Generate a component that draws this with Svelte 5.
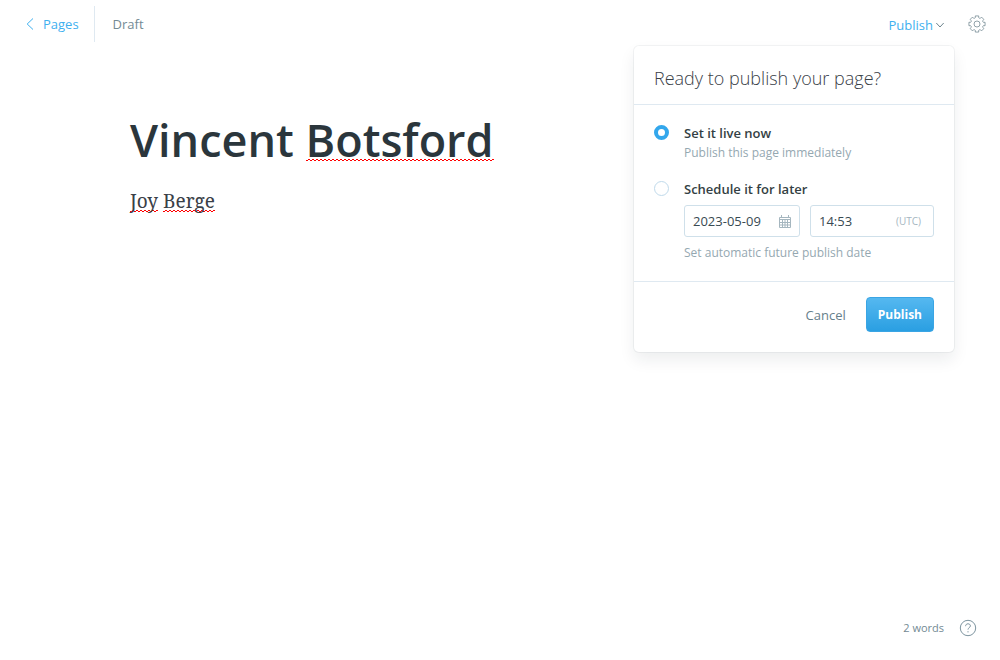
<script>
  let timing = $state('now');
  let date = $state('2023-05-09');
  let time = $state('14:53');

  // Outline of an eight-toothed gear centred on 12,12
  const gear = Array.from({ length: 8 }, (_, i) => {
    const at = (deg, r) => {
      const a = ((i * 45 + deg) * Math.PI) / 180;
      return `${(12 + r * Math.sin(a)).toFixed(2)} ${(12 - r * Math.cos(a)).toFixed(2)}`;
    };
    return `${i ? 'L' : 'M'}${at(-12, 11)}L${at(12, 11)}Q${at(12, 8)} ${at(22.5, 8.4)}Q${at(33, 8)} ${at(33, 11)}`;
  }).join('') + 'Z';
</script>

<div class="editor">
  <header>
    <nav>
      <a class="back" href="#pages">
        <svg width="8" height="12" viewBox="0 0 8 12" aria-hidden="true"><path d="M7 .5 1.2 6 7 11.5" /></svg>
        Pages
      </a>
      <span class="status">Draft</span>
    </nav>
    <div class="actions">
      <div class="publish-menu">
        <button class="trigger" type="button" aria-expanded="true">
          Publish
          <svg width="8" height="6" viewBox="0 0 8 6" aria-hidden="true"><path d="M.3 1 4 5 7.7 1" /></svg>
        </button>
        <form class="popover" onsubmit={(e) => e.preventDefault()}>
          <h2>Ready to publish your page?</h2>
          <div class="options">
            <div class="option">
              <input type="radio" id="now" value="now" bind:group={timing} />
              <div class="detail">
                <label for="now">Set it live now</label>
                <p>Publish this page immediately</p>
              </div>
            </div>
            <div class="option">
              <input type="radio" id="later" value="later" bind:group={timing} />
              <div class="detail">
                <label for="later">Schedule it for later</label>
                <div class="fields">
                  <div class="field date">
                    <input type="text" aria-label="Date" bind:value={date} />
                    <svg width="12" height="13" viewBox="0 0 12 13" aria-hidden="true">
                      <path d="M.5 2.5h11v10H.5zM.5 4.5h11M.5 7.5h11M.5 10h11M3.5 4.5v8M6 4.5v8M8.5 4.5v8M2.5 0v3M9.5 0v3" />
                    </svg>
                  </div>
                  <div class="field time">
                    <input type="text" aria-label="Time" bind:value={time} />
                    <small>(UTC)</small>
                  </div>
                </div>
                <p>Set automatic future publish date</p>
              </div>
            </div>
          </div>
          <div class="buttons">
            <button class="cancel" type="button">Cancel</button>
            <button class="submit" type="submit">Publish</button>
          </div>
        </form>
      </div>
      <button class="icon" type="button" aria-label="Settings">
        <svg width="18" height="18" viewBox="0 0 24 24" aria-hidden="true">
          <path d={gear} /><circle cx="12" cy="12" r="4" />
        </svg>
      </button>
    </div>
  </header>

  <main>
    <h1>Vincent <span class="misspelt">Botsford</span></h1>
    <p class="body"><span class="misspelt">Joy</span> <span class="misspelt">Berge</span></p>
  </main>

  <footer>
    <span>2 words</span>
    <a href="#help" aria-label="Help">
      <svg width="18" height="18" viewBox="0 0 18 18" aria-hidden="true">
        <circle cx="9" cy="9" r="7.7" />
        <path d="M6.6 7.2C6.6 5.7 7.6 4.8 9 4.8s2.4.9 2.4 2.1c0 1.7-2.4 1.8-2.4 3.7M9 12.2v1.2" />
      </svg>
    </a>
  </footer>
</div>

<style>
  :global(body) {
    margin: 0;
    background: #fff;
  }
  .editor {
    box-sizing: border-box;
    display: flex;
    flex-direction: column;
    min-height: 100vh;
    color: #394047;
    font-family: "Open Sans", "Noto Sans", sans-serif;
    font-size: 13px;
    line-height: 20px;
  }
  svg {
    display: block;
    fill: none;
    stroke: currentColor;
  }
  button,
  input {
    margin: 0;
    padding: 0;
    border: 0;
    background: none;
    color: inherit;
    font: inherit;
  }
  button {
    cursor: pointer;
  }
  h1,
  h2,
  p {
    margin: 0;
  }
  header {
    display: flex;
    align-items: center;
    justify-content: space-between;
    height: 48px;
    padding: 0 14px 0 26px;
  }
  nav,
  .actions {
    display: flex;
    align-items: center;
  }
  .back {
    display: flex;
    align-items: center;
    gap: 9px;
    height: 36px;
    padding-right: 15px;
    border-right: 1px solid #dfe9f1;
    color: #3eb0ef;
    text-decoration: none;
  }
  .status {
    padding-left: 18px;
    color: #738a94;
  }
  .actions {
    gap: 24px;
  }
  .publish-menu {
    position: relative;
  }
  .trigger {
    display: flex;
    align-items: center;
    gap: 3px;
    padding-top: 2px;
    color: #3eb0ef;
  }
  .trigger svg,
  .icon {
    color: #6d848e;
  }
  .popover {
    position: absolute;
    top: 33px;
    right: -10px;
    width: 320px;
    border-radius: 5px;
    background: #fff;
    box-shadow: 0 0 0 1px rgba(99, 114, 130, 0.08), 0 8px 16px rgba(27, 39, 51, 0.08);
  }
  h2 {
    padding: 20px 20px 14px;
    border-bottom: 1px solid #dfe9f1;
    color: #394047;
    font-size: 18px;
    font-weight: 300;
    line-height: 24px;
  }
  .options {
    display: grid;
    gap: 16px;
    padding: 18px 20px;
  }
  .option {
    display: flex;
    gap: 15px;
  }
  .option > input {
    appearance: none;
    box-sizing: border-box;
    flex: none;
    width: 15px;
    height: 15px;
    margin-top: 2px;
    border: 1px solid #c0daeb;
    border-radius: 50%;
  }
  .option > input:checked {
    border: 4px solid #33a7ec;
  }
  .detail {
    flex: 1;
    min-width: 0;
  }
  label {
    display: block;
    color: #343f44;
    font-weight: 600;
  }
  .detail p {
    color: #95a8b1;
    font-size: 12px;
  }
  .fields {
    display: grid;
    grid-template-columns: 116fr 124fr;
    gap: 10px;
    margin: 6px 0;
  }
  .field {
    box-sizing: border-box;
    display: flex;
    align-items: center;
    min-width: 0;
    height: 32px;
    padding: 0 8px;
    border: 1px solid #cfe0ea;
    border-radius: 3px;
    color: #a5b6bf;
  }
  .field.time {
    padding-right: 12px;
  }
  .field input {
    flex: 1;
    width: 0;
    min-width: 0;
    height: 30px;
    color: #394a52;
  }
  small {
    font-size: 10px;
  }
  .buttons {
    display: flex;
    align-items: center;
    justify-content: flex-end;
    gap: 20px;
    padding: 15px 20px 20px;
    border-top: 1px solid #dfe9f1;
  }
  .cancel {
    color: #66808b;
  }
  .submit {
    height: 35px;
    padding: 0 11px;
    border: 1px solid #3aa5e4;
    border-radius: 4px;
    background: linear-gradient(#55b8f0, #2a9fe2);
    color: #fff;
    font-size: 12px;
    font-weight: 700;
  }
  main {
    flex: 1;
    box-sizing: border-box;
    width: 100%;
    max-width: 1000px;
    margin: 0 auto;
    padding: 62px 130px;
  }
  h1 {
    --squiggle-lift: 9px;
    color: #2b363c;
    font-size: 45px;
    font-weight: 600;
    line-height: 60px;
  }
  .body {
    --squiggle-lift: 2px;
    margin-top: 16px;
    font-family: "Noto Serif", "DejaVu Serif", Georgia, serif;
    font-size: 19px;
    line-height: 30px;
  }
  .misspelt {
    background: url("data:image/svg+xml,%3Csvg xmlns='http://www.w3.org/2000/svg' width='4' height='2'%3E%3Cpath d='M0 1h2v1H0zM2 0h2v1H2z' fill='red'/%3E%3C/svg%3E")
      repeat-x left bottom var(--squiggle-lift);
  }
  footer {
    display: flex;
    align-items: center;
    justify-content: flex-end;
    gap: 15px;
    padding: 22px 23px;
    color: #738a94;
    font-size: 11px;
  }
  footer a {
    color: #7d949f;
  }
</style>
